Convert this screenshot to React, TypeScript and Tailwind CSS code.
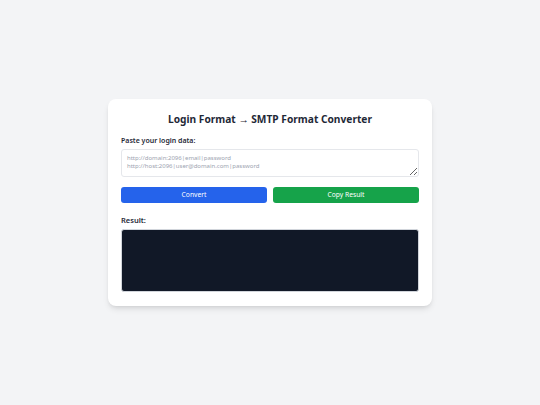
import { type FC } from "react";

const font = { fontFamily: '"Noto Sans", "Open Sans", sans-serif' };

const App: FC = () => {
  return (
    <div
      className="min-h-screen w-full bg-[#f3f4f6] flex items-center justify-center"
      style={font}
    >
      <div className="w-[324px] bg-white rounded-lg shadow-md px-[13px] pt-[13px] pb-[14px]">
        {/* タイトル */}
        <h1 className="text-center text-[10.2px] leading-[14px] font-bold text-[#1f2937]">
          Login Format → SMTP Format Converter
        </h1>

        {/* 入力欄 */}
        <label className="block mt-[10px] text-[7px] leading-[10px] font-semibold text-[#1f2937]">
          Paste your login data:
        </label>
        <textarea
          className="block mt-[3px] w-full h-[28px] resize-y border border-[#e5e7eb] rounded-[3px] px-[5px] pt-[4px] text-[6px] leading-[8px] text-[#374151] placeholder:text-[#9ca3af] outline-none"
          placeholder={"http://domain:2096|email|password\nhttp://host:2096|user@domain.com|password"}
        />

        {/* ボタン */}
        <div className="flex gap-[6px] mt-[10px]">
          <button className="flex-1 h-[16px] rounded-[3px] bg-[#2563eb] text-white text-[6.7px] leading-[16px]">
            Convert
          </button>
          <button className="flex-1 h-[16px] rounded-[3px] bg-[#16a34a] text-white text-[6.7px] leading-[16px]">
            Copy Result
          </button>
        </div>

        {/* 結果 */}
        <div className="mt-[12px] text-[7.5px] leading-[10px] font-semibold text-[#1f2937]">
          Result:
        </div>
        <div className="mt-[4px] h-[63px] rounded-[3px] bg-[#111827] border border-[#d1d5db]" />
      </div>
    </div>
  );
};

export default App;
